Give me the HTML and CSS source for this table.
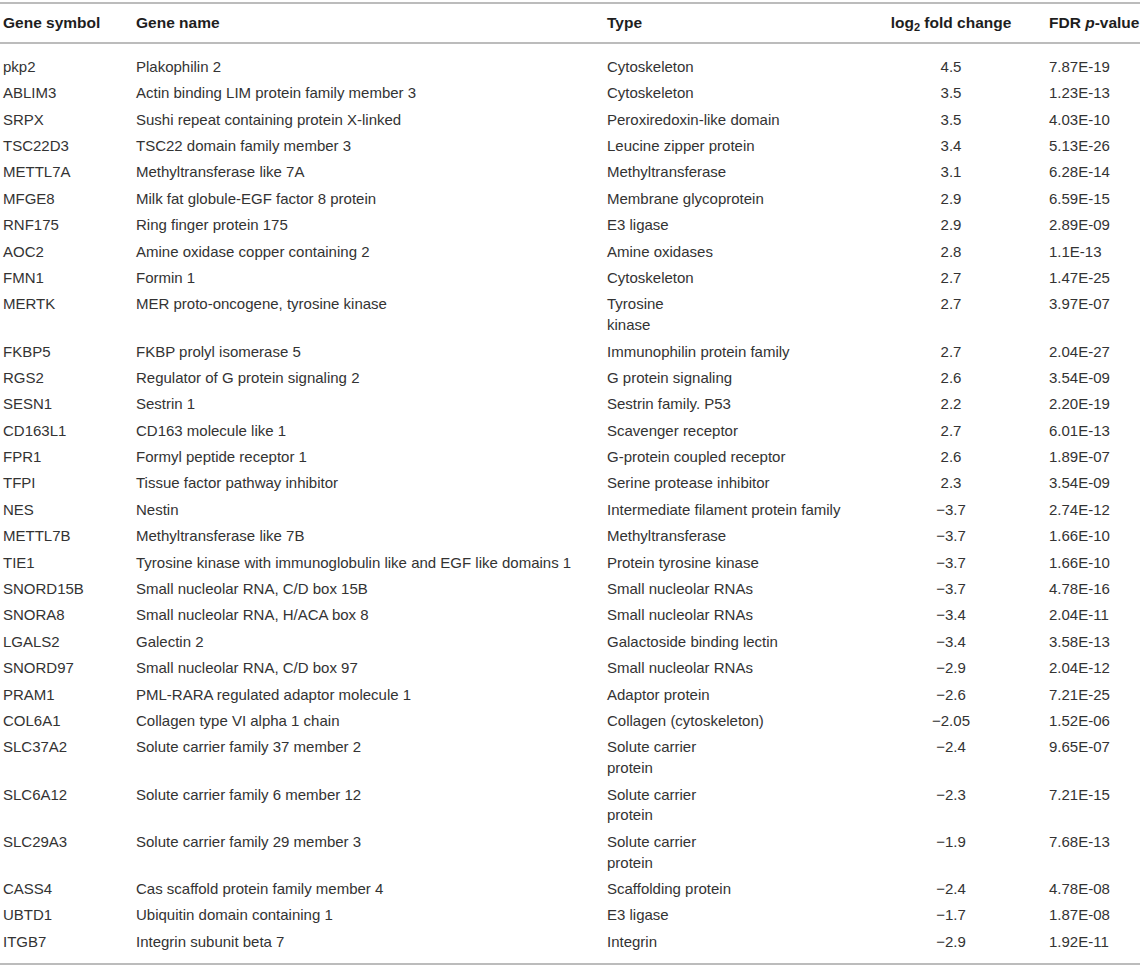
FILE: index.html
```html
<!DOCTYPE html>
<html>
<head>
<meta charset="utf-8">
<link rel="stylesheet" href="styles.css">
</head>
<body>
<table class="genes">
<thead>
<tr><th class="c-sym">Gene symbol</th><th class="c-name">Gene name</th><th class="c-type">Type</th><th class="c-fc num">log<sub>2</sub> fold change</th><th class="c-fdr">FDR <i>p</i>-value</th></tr>
</thead>
<tbody>
<tr><td>pkp2</td><td>Plakophilin 2</td><td>Cytoskeleton</td><td class="num">4.5</td><td>7.87E-19</td></tr>
<tr><td>ABLIM3</td><td>Actin binding LIM protein family member 3</td><td>Cytoskeleton</td><td class="num">3.5</td><td>1.23E-13</td></tr>
<tr><td>SRPX</td><td>Sushi repeat containing protein X-linked</td><td>Peroxiredoxin-like domain</td><td class="num">3.5</td><td>4.03E-10</td></tr>
<tr><td>TSC22D3</td><td>TSC22 domain family member 3</td><td>Leucine zipper protein</td><td class="num">3.4</td><td>5.13E-26</td></tr>
<tr><td>METTL7A</td><td>Methyltransferase like 7A</td><td>Methyltransferase</td><td class="num">3.1</td><td>6.28E-14</td></tr>
<tr><td>MFGE8</td><td>Milk fat globule-EGF factor 8 protein</td><td>Membrane glycoprotein</td><td class="num">2.9</td><td>6.59E-15</td></tr>
<tr><td>RNF175</td><td>Ring finger protein 175</td><td>E3 ligase</td><td class="num">2.9</td><td>2.89E-09</td></tr>
<tr><td>AOC2</td><td>Amine oxidase copper containing 2</td><td>Amine oxidases</td><td class="num">2.8</td><td>1.1E-13</td></tr>
<tr><td>FMN1</td><td>Formin 1</td><td>Cytoskeleton</td><td class="num">2.7</td><td>1.47E-25</td></tr>
<tr><td>MERTK</td><td>MER proto-oncogene, tyrosine kinase</td><td>Tyrosine<br>kinase</td><td class="num">2.7</td><td>3.97E-07</td></tr>
<tr><td>FKBP5</td><td>FKBP prolyl isomerase 5</td><td>Immunophilin protein family</td><td class="num">2.7</td><td>2.04E-27</td></tr>
<tr><td>RGS2</td><td>Regulator of G protein signaling 2</td><td>G protein signaling</td><td class="num">2.6</td><td>3.54E-09</td></tr>
<tr><td>SESN1</td><td>Sestrin 1</td><td>Sestrin family. P53</td><td class="num">2.2</td><td>2.20E-19</td></tr>
<tr><td>CD163L1</td><td>CD163 molecule like 1</td><td>Scavenger receptor</td><td class="num">2.7</td><td>6.01E-13</td></tr>
<tr><td>FPR1</td><td>Formyl peptide receptor 1</td><td>G-protein coupled receptor</td><td class="num">2.6</td><td>1.89E-07</td></tr>
<tr><td>TFPI</td><td>Tissue factor pathway inhibitor</td><td>Serine protease inhibitor</td><td class="num">2.3</td><td>3.54E-09</td></tr>
<tr><td>NES</td><td>Nestin</td><td>Intermediate filament protein family</td><td class="num">−3.7</td><td>2.74E-12</td></tr>
<tr><td>METTL7B</td><td>Methyltransferase like 7B</td><td>Methyltransferase</td><td class="num">−3.7</td><td>1.66E-10</td></tr>
<tr><td>TIE1</td><td>Tyrosine kinase with immunoglobulin like and EGF like domains 1</td><td>Protein tyrosine kinase</td><td class="num">−3.7</td><td>1.66E-10</td></tr>
<tr><td>SNORD15B</td><td>Small nucleolar RNA, C/D box 15B</td><td>Small nucleolar RNAs</td><td class="num">−3.7</td><td>4.78E-16</td></tr>
<tr><td>SNORA8</td><td>Small nucleolar RNA, H/ACA box 8</td><td>Small nucleolar RNAs</td><td class="num">−3.4</td><td>2.04E-11</td></tr>
<tr><td>LGALS2</td><td>Galectin 2</td><td>Galactoside binding lectin</td><td class="num">−3.4</td><td>3.58E-13</td></tr>
<tr><td>SNORD97</td><td>Small nucleolar RNA, C/D box 97</td><td>Small nucleolar RNAs</td><td class="num">−2.9</td><td>2.04E-12</td></tr>
<tr><td>PRAM1</td><td>PML-RARA regulated adaptor molecule 1</td><td>Adaptor protein</td><td class="num">−2.6</td><td>7.21E-25</td></tr>
<tr><td>COL6A1</td><td>Collagen type VI alpha 1 chain</td><td>Collagen (cytoskeleton)</td><td class="num">−2.05</td><td>1.52E-06</td></tr>
<tr><td>SLC37A2</td><td>Solute carrier family 37 member 2</td><td>Solute carrier<br>protein</td><td class="num">−2.4</td><td>9.65E-07</td></tr>
<tr><td>SLC6A12</td><td>Solute carrier family 6 member 12</td><td>Solute carrier<br>protein</td><td class="num">−2.3</td><td>7.21E-15</td></tr>
<tr><td>SLC29A3</td><td>Solute carrier family 29 member 3</td><td>Solute carrier<br>protein</td><td class="num">−1.9</td><td>7.68E-13</td></tr>
<tr><td>CASS4</td><td>Cas scaffold protein family member 4</td><td>Scaffolding protein</td><td class="num">−2.4</td><td>4.78E-08</td></tr>
<tr><td>UBTD1</td><td>Ubiquitin domain containing 1</td><td>E3 ligase</td><td class="num">−1.7</td><td>1.87E-08</td></tr>
<tr><td>ITGB7</td><td>Integrin subunit beta 7</td><td>Integrin</td><td class="num">−2.9</td><td>1.92E-11</td></tr>
</tbody>
</table>
</body>
</html>
```
FILE: styles.css
```css
html, body {
  margin: 0;
  padding: 0;
  background: #ffffff;
}
body {
  padding-top: 2px;
  font-family: "Liberation Sans", Arial, sans-serif;
  color: #333333;
}
.genes {
  width: 1140px;
  border-collapse: collapse;
  table-layout: fixed;
  border-top: 2px solid #bcbcbc;
  border-bottom: 2px solid #bcbcbc;
  font-size: 15px;
}
.genes th,
.genes td {
  box-sizing: border-box;
}
.c-sym { width: 133px; }
.c-name { width: 471px; }
.c-type { width: 252px; }
.c-fc { width: 190px; }
.c-fdr { width: 94px; }
.genes th {
  text-align: left;
  font-weight: bold;
  font-size: 15.5px;
  color: #1e1e1e;
  height: 40px;
  padding: 0 3px;
  line-height: 20px;
  vertical-align: middle;
  border-bottom: 2px solid #bcbcbc;
  white-space: nowrap;
}
.genes th sub {
  font-size: 11px;
  line-height: 0;
  vertical-align: -3px;
}
.genes td {
  padding: 2.8px 3px;
  line-height: 20.8px;
  vertical-align: top;
  white-space: nowrap;
}
.genes .num {
  text-align: center;
}
.genes tbody tr:first-child td {
  padding-top: 12.8px;
}
.genes tbody tr:last-child td {
  padding-bottom: 10px;
}
```
